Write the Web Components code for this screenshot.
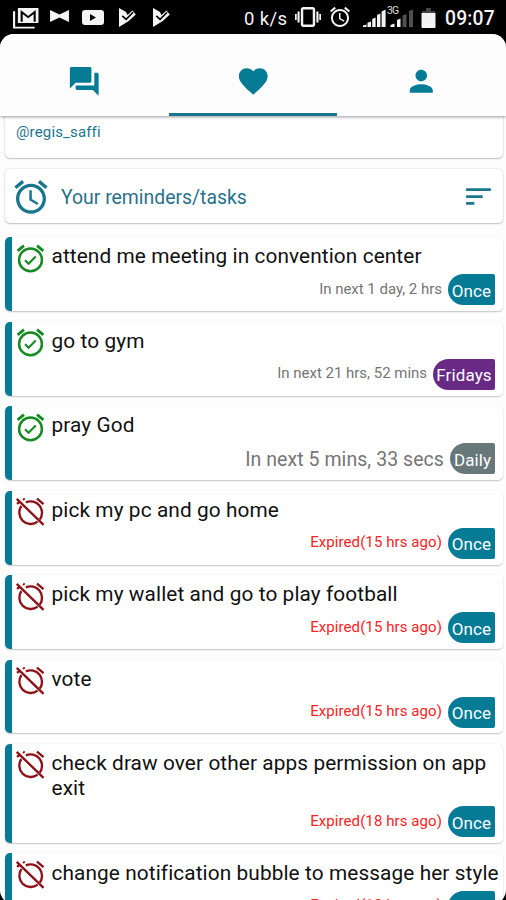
<!DOCTYPE html>
<html lang="en">
<head>
<meta charset="utf-8">
<title>Reminders</title>
<style>
html,body{margin:0;height:100%;background:#000;overflow:hidden}
body{font-family:Roboto,"Liberation Sans",sans-serif;color:#111}
</style>
</head>
<body>
<reminder-app></reminder-app>
<script>
const TEAL = '#067b96';
const ALARM = 'M22 5.72l-4.6-3.86-1.29 1.53 4.6 3.86L22 5.72zM7.88 3.39L6.6 1.86 2 5.71l1.29 1.53 4.59-3.85z';
const RING = 'M12 4c-4.97 0-9 4.03-9 9s4.02 9 9 9c4.97 0 9-4.03 9-9s-4.03-9-9-9z';
const ICONS = {
  forum: '<path d="M21 6h-2v9H6v2c0 .55.45 1 1 1h11l4 4V7c0-.55-.45-1-1-1zm-4 6V3c0-.55-.45-1-1-1H3c-.55 0-1 .45-1 1v14l4-4h10c.55 0 1-.45 1-1z"/>',
  heart: '<path d="M12 21.35l-1.45-1.32C5.4 15.36 2 12.28 2 8.5 2 5.42 4.42 3 7.5 3c1.74 0 3.41.81 4.5 2.09C13.09 3.81 14.76 3 16.5 3 19.58 3 22 5.42 22 8.5c0 3.78-3.4 6.86-8.55 11.54L12 21.35z"/>',
  person: '<path d="M12 12c2.21 0 4-1.79 4-4s-1.79-4-4-4-4 1.79-4 4 1.79 4 4 4zm0 2c-2.67 0-8 1.34-8 4v2h16v-2c0-2.66-5.33-4-8-4z"/>',
  sort: '<path d="M3 18h6v-2H3v2zM3 6v2h18V6H3zm0 7h12v-2H3v2z"/>',
  alarm: `<path d="${ALARM}M12.5 8H11v6l4.75 2.85.75-1.23-4-2.37V8z"/><path fill-rule="evenodd" d="${RING}m0 16c-3.87 0-7-3.13-7-7s3.13-7 7-7 7 3.13 7 7-3.13 7-7 7z"/>`,
  on: `<path d="${ALARM}"/><circle cx="12" cy="13" r="8.3" fill="none" stroke="currentColor" stroke-width="1.800"/><path d="M8 13.2l2.6 2.6 5.2-5.2" fill="none" stroke="currentColor" stroke-width="1.500"/>`,
  off: '<g fill="none" stroke="currentColor" stroke-width="1.700"><path d="M8.6 5.4A8.3 8.3 0 0 1 18.8 17.8M17.2 19.4A8.3 8.3 0 0 1 5.4 8"/><path d="M2 2.8L21.5 21.7M16.7 2.6l4.8 4M6.7 2.6l1 .9M2.2 6.5l1.4-1.2"/></g>',
  gmail: '<g fill="none" stroke="currentColor"><path d="M1 4.500v18h19" stroke-width="2"/><path d="M5.5 2h17v14.500h-17z" fill="currentColor" stroke-width="2"/><path d="M8 16V5.500l6 5.500 6-5.500V16" stroke="#000" stroke-width="1.9"/></g>',
  bow: '<path d="M1 3l9 4.500 9-4.500v12l-9-4.500-9 4.500z"/>',
  tube: '<path fill-rule="evenodd" d="M4 1h16q3 0 3 3v9q0 3-3 3H4q-3 0-3-3V4q0-3 3-3zm5 4v7l6-3.5z"/>',
  play: '<path d="M1 1l7 4 1.5 3 5-4.5 3.300 4-7 6.500L1 20z"/><path d="M4.3 8.8l3.8 3.5 7-7" fill="none" stroke="#000" stroke-width="1.6"/>',
  vibrate: '<path d="M0 8h1.800v6H0zM2.600 5.500h2.200v11H2.600zM22.200 5.500h2.200v11h-2.200zM25.200 8h1.800v6h-1.800z"/><rect x="7.3" y="2.3" width="12.4" height="17.4" rx="1.5" fill="none" stroke="currentColor" stroke-width="2.5"/>',
  signal: '<path d="M0 18h3.500v-2.500L0 16.500zM4.500 18H8v-5.500l-3.500 1.300zM9.200 18h3.400V8.500L9.200 10zM14 18h3.400V4.500L14 6zM18.600 18h4V.500l-4 2zM27.500 18h4v-3.500l-4 1.500zM34 18h3.500V9.500L34 11z"/><path fill="#505050" d="M39.500 18h4V5l-4 1.500zM46 18h4V.500L46 2z"/>',
  battery: '<path fill="#444" d="M5 0h5v3h4v3H1V3h4z"/><path d="M.5 5h14v14q0 1-1 1h-12q-1 0-1-1z"/>'
};
const define = (name, html) => customElements.define(name, class extends HTMLElement {
  connectedCallback() {
    if (this.shadowRoot) return;
    this.attachShadow({mode: 'open'}).innerHTML = typeof html === 'function' ? html(this) : html;
  }
});

define('app-icon', e => {
  const [w, h] = (e.getAttribute('size') || '24 24').split(' ');
  const vb = e.getAttribute('box') || '24 24';
  return `<style>:host{display:block;flex:none;width:${w}px;height:${h}px}svg{display:block;width:100%;height:100%}</style>
  <svg viewBox="0 0 ${vb}" preserveAspectRatio="none" fill="currentColor">${ICONS[e.getAttribute('name')]}</svg>`;
});

define('status-bar', `<style>
:host{display:flex;height:34px;background:#000;color:#f4f4f4;box-sizing:border-box;padding:0 0 0 13px;align-items:flex-start}
app-icon{margin-top:7px}
.rate{font-size:18.5px;line-height:22px;margin:8px 0 0 74px;width:45px;letter-spacing:.4px;white-space:nowrap}
.clock{font-size:19.3px;font-weight:500;line-height:22px;margin:8px 0 0 9px;letter-spacing:.2px}
.sig{position:relative;margin-left:11px}
.sig span{position:absolute;left:24px;top:5px;font-size:10.500px;line-height:12px;letter-spacing:-.8px;color:#ddd}
</style>
<app-icon name="gmail" size="26 22" box="24 24"></app-icon>
<app-icon name="bow" size="21 18" box="20 18" style="margin-left:10px"></app-icon>
<app-icon name="tube" size="24 17" box="24 17" style="margin:9px 0 0 11px"></app-icon>
<app-icon name="play" size="18 21" box="18 21" style="margin:7px 0 0 13px"></app-icon>
<app-icon name="play" size="18 21" box="18 21" style="margin:7px 0 0 16px"></app-icon>
<span class="rate">0 k/s</span>
<app-icon name="vibrate" size="26 22" box="27 22" style="margin-left:6px;margin-top:6px"></app-icon>
<app-icon name="alarm" size="24 24" style="margin-left:7px;margin-top:5px"></app-icon>
<div class="sig"><app-icon name="signal" size="50 18" box="50 18" style="margin-top:9px"></app-icon><span>3G</span></div>
<app-icon name="battery" size="15 20" box="15 20" style="margin-left:8px;margin-top:8px"></app-icon>
<span class="clock">09:07</span>`);

define('tab-item', `<style>
:host{flex:1;display:flex;align-items:center;justify-content:center;box-sizing:border-box;padding-top:16px;color:${TEAL};border-bottom:3px solid transparent}
:host([active]){border-color:#19768f}
</style><slot></slot>`);

define('tab-bar', `<style>
:host{display:flex;height:82px;background:#fdfdfd;box-shadow:0 1px 3px rgba(0,0,0,.4);position:relative;z-index:1}
</style><slot></slot>`);

define('plain-card', `<style>
:host{display:flex;box-sizing:border-box;background:#fff;border-radius:5px;box-shadow:0 1px 1.5px rgba(0,0,0,.2),0 0 2px rgba(0,0,0,.18);color:#19768f}
</style><slot></slot>`);

define('repeat-badge', `<style>
:host{display:flex;align-items:center;justify-content:center;flex:none;box-sizing:border-box;height:31px;border-radius:16px 2px 2px 16px;padding-top:2px;color:#fff;font-size:17px;background:${TEAL};width:47px;letter-spacing:.1px}
:host([kind=Fridays]){background:#692a86;width:62px}
:host([kind=Daily]){background:#68777a;width:45px}
</style><slot></slot>`);

define('reminder-card', e => `<style>
:host{display:flex;box-sizing:border-box;padding-left:9px;border-radius:5px;background:linear-gradient(90deg,${TEAL} 7px,#fff 7px);box-shadow:0 1px 1.5px rgba(0,0,0,.22),0 0 1px rgba(0,0,0,.15)}
app-icon{color:#8f1118;margin-top:4.5px}
:host([state=on]) app-icon{color:#158a22}
.body{flex:1;min-width:0;padding:7.4px 0 5.600px 4.500px}
.title{font-size:20.8px;line-height:25px;letter-spacing:.1px;color:#111}
.meta{display:flex;justify-content:flex-end;gap:6px;padding-right:8px;margin-top:5px}
.due{font-size:15px;line-height:18px;margin-top:5.400px;letter-spacing:.08px;color:#f22;white-space:nowrap}
:host([state=on]) .due{color:#757575;letter-spacing:-.02px}
:host([large]) .due{font-size:19.500px;line-height:24px;margin-top:5px;letter-spacing:.06px}
</style>
<app-icon name="${e.getAttribute('state')}" size="33 33"></app-icon>
<div class="body"><div class="title"><slot></slot></div>
<div class="meta"><span class="due">${e.getAttribute('due')}</span><repeat-badge kind="${e.getAttribute('repeat')}">${e.getAttribute('repeat')}</repeat-badge></div></div>`);

define('reminder-app', `<style>
:host{display:block;width:506px;height:900px;overflow:hidden;background:#000}
.screen{height:870px;border-radius:14px;background:#fdfdfd;overflow:hidden}
.feed{display:flex;flex-direction:column;gap:10.500px;padding:0 3px 0 5px}
.profile{height:42px;padding:7px 11px;font-size:15px;line-height:19px;letter-spacing:.15px;border-radius:0 0 5px 5px}
.head{height:54px;align-items:center;padding:1px 8px 0 6px;margin:.700px 0 3.400px}
.head span{flex:1;padding:2px 0 0 10px;font-size:19.400px;letter-spacing:0;color:#28718b}
</style>
<status-bar></status-bar>
<div class="screen">
<tab-bar>
<tab-item><app-icon name="forum" size="34.5 34.5"></app-icon></tab-item>
<tab-item active><app-icon name="heart" size="34.5 34.5"></app-icon></tab-item>
<tab-item><app-icon name="person" size="34.5 34.5"></app-icon></tab-item>
</tab-bar>
<div class="feed">
<plain-card class="profile"><span>@regis_saffi</span></plain-card>
<plain-card class="head"><app-icon name="alarm" size="40 40"></app-icon><span>Your reminders/tasks</span><app-icon name="sort" size="33 33"></app-icon></plain-card>
<reminder-card state="on" due="In next 1 day, 2 hrs" repeat="Once">attend me meeting in convention center</reminder-card>
<reminder-card state="on" due="In next 21 hrs, 52 mins" repeat="Fridays">go to gym</reminder-card>
<reminder-card state="on" large due="In next 5 mins, 33 secs" repeat="Daily">pray God</reminder-card>
<reminder-card state="off" due="Expired(15 hrs ago)" repeat="Once">pick my pc and go home</reminder-card>
<reminder-card state="off" due="Expired(15 hrs ago)" repeat="Once">pick my wallet and go to play football</reminder-card>
<reminder-card state="off" due="Expired(15 hrs ago)" repeat="Once">vote</reminder-card>
<reminder-card state="off" due="Expired(18 hrs ago)" repeat="Once">check draw over other apps permission on app exit</reminder-card>
<reminder-card state="off" due="Expired(18 hrs ago)" repeat="Once">change notification bubble to message her style</reminder-card>
</div>
</div>`);
</script>
</body>
</html>
